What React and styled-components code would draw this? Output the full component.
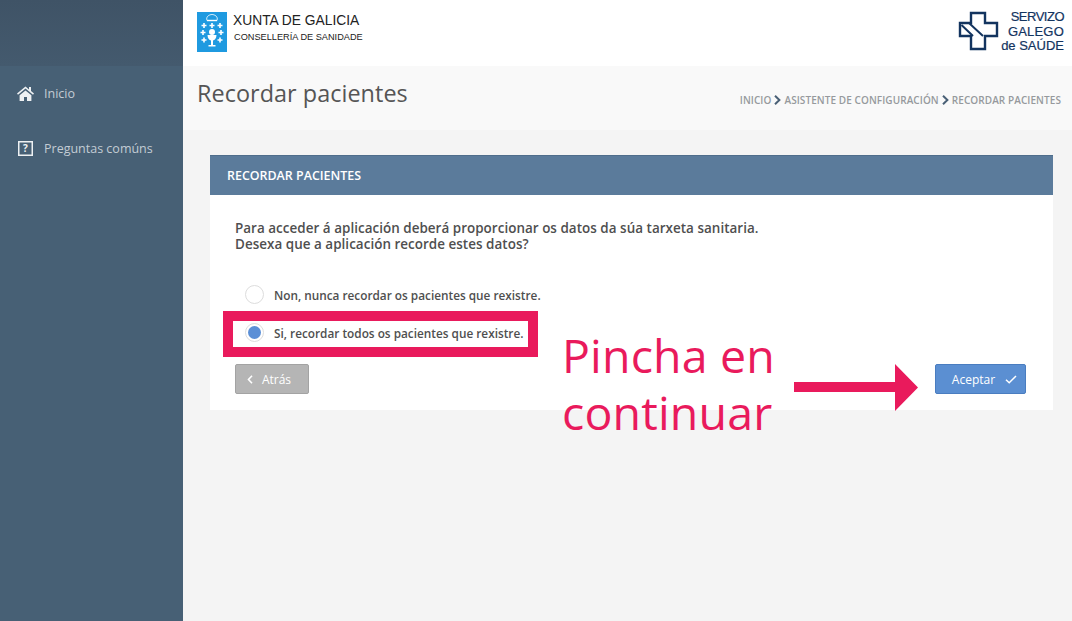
import React from "react";
import styled, { createGlobalStyle } from "styled-components";

const Global = createGlobalStyle`
  html, body { margin: 0; padding: 0; height: 100%; background: #f4f4f4; overflow: hidden; }
  body { font-family: "Open Sans", sans-serif; color: #444; }
`;
const Page = styled.div`position: relative; display: flex; width: 1072px; height: 621px; overflow: hidden;`;
const Sidebar = styled.aside`width: 183px; flex: none; background: #476075; display: flex; flex-direction: column;`;
const SideTop = styled.div`height: 66px; background: linear-gradient(180deg, #3f5366 0%, #445a6e 100%); margin-bottom: 10px;`;
const NavItem = styled.a`
  display: flex; align-items: center; height: 35px; padding-left: 17px; gap: 10px; margin-bottom: ${p => p.$mb || 0}px;
  color: #c3ccd4; font-size: 12.5px; line-height: 35px;
`;
const IconSlot = styled.span`width: 17px; height: 17px; display: flex; align-items: center; justify-content: center; color: #eef1f3;`;
const Main = styled.main`flex: 1; display: flex; flex-direction: column; min-width: 0;`;
const TopBar = styled.header`height: 66px; box-sizing: border-box; background: #fff; display: flex; align-items: flex-start; justify-content: space-between; padding: 12px 8px 0 14px;`;
const Brand = styled.div`display: flex; align-items: flex-start; gap: 6px;`;
const BrandText = styled.div`display: flex; flex-direction: column; font-family: "Liberation Sans", sans-serif; color: #222;`;
const BrandName = styled.span`font-size: 13.8px; line-height: 17px;`;
const BrandSub = styled.span`font-size: 9.2px; line-height: 13px; margin-top: 1.5px; margin-left: 1px;`;
const Sergas = styled.div`display: flex; align-items: flex-start; color: #13345f; gap: 2px;`;
const SergasText = styled.div`display: flex; flex-direction: column; align-items: flex-end; font-family: "Liberation Sans", sans-serif; font-size: 13px; line-height: 14.5px; margin-top: -2px; -webkit-text-stroke: 0.2px #13345f;`;
const SergasLine = styled.span`letter-spacing: ${p => p.$ls || 0}px;`;
const TitleBar = styled.div`height: 64px; background: #f9f9f9; display: flex; justify-content: space-between; padding: 0 11px 0 14px;`;
const Title = styled.h1`margin: 9px 0 0; font-size: 23.4px; line-height: 36px; font-weight: 400; color: #555; letter-spacing: 0.05px;`;
const Crumbs = styled.nav`display: flex; align-items: center; gap: 3px; height: 16px; margin-top: 26px; font-size: 10px; font-weight: 600; color: #96999d; letter-spacing: 0.08px;`;
const Content = styled.div`flex: 1; padding: 25px 19px 0 27px;`;
const Card = styled.section`background: #fff; height: 255px; display: flex; flex-direction: column;`;
const CardHead = styled.div`height: 39px; background: #5b7b9b; border-top: 1px solid #4f6d8b; color: #fff; font-size: 12.45px; font-weight: 600; line-height: 39px; padding-left: 17px;`;
const CardBody = styled.div`flex: 1; padding: 25px 26px 0 25px;`;
const Question = styled.p`margin: 0 0 33px; font-size: 13.45px; line-height: 16px; font-weight: 600; color: #4f4f4f; letter-spacing: 0.03px;`;
const Option = styled.label`display: flex; align-items: center; gap: 10px; height: 19px; margin: 0 0 19px 10px; font-size: 11.8px; font-weight: 600; color: #4f4f4f;`;
const Radio = styled.span`
  width: 19px; height: 19px; border-radius: 50%; border: 1px solid #ddd; box-sizing: border-box; background: #fff; flex: none;
  display: flex; align-items: center; justify-content: center;
  &::after { content: ""; width: 13px; height: 13px; border-radius: 50%; background: ${p => p.$on ? "#5b8fd6" : "transparent"}; }
`;
const Actions = styled.div`display: flex; justify-content: space-between; margin-top: 22px; padding-right: 1px;`;
const Button = styled.button`
  height: 30px; box-sizing: border-box; display: flex; align-items: center; justify-content: center; gap: ${p => p.$gap}px;
  width: ${p => p.$w}px; border-radius: 2px; font: 400 12px "Open Sans", sans-serif; color: #fff;
  padding: ${p => p.$primary ? "0 0 0 8px" : "0 6px 0 0"};
  background: ${p => p.$primary ? "#5b8fd2" : "#b5b5b5"}; border: 1px solid ${p => p.$primary ? "#4a7dc0" : "#a3a3a3"};
`;
const Highlight = styled.div`position: absolute; left: 223px; top: 311px; width: 315px; height: 46px; box-sizing: border-box; border: 10px solid #e91a5c; pointer-events: none;`;
const Callout = styled.div`position: absolute; left: 562px; top: 327px; width: 240px; font-size: 46.5px; line-height: 57px; color: #e91a5c; letter-spacing: 0.15px;`;
const ArrowSvg = styled.svg`position: absolute; left: 794px; top: 364px;`;

const Chevron = () => (
  <svg width="7" height="10" viewBox="0 0 7 10"><path d="M1 0.8 5.4 5 1 9.2" fill="none" stroke="#4a6076" strokeWidth="2"/></svg>
);

const Shield = () => (
  <svg width="30" height="40" viewBox="0 0 30 40" style={{ flex: "none" }}>
    <rect width="30" height="40" fill="#1f9ae0" />
    <g fill="none" stroke="#fff" strokeWidth="0.8">
      <path d="M10 8.500c-1.500-4 2.500-6 5-6s6.500 2 5 6z" />
      <path d="M10 8.500h10" strokeWidth="1.400" />
    </g>
    <g fill="#fff">
      {[[7, 13.5], [15, 13.5], [23, 13.5], [6, 20.5], [24, 20.5], [7, 28], [23, 28]].map(([x, y], i) => (
        <path key={i} d={`M${x - 0.8} ${y - 2.5}h1.600v1.700h1.700v1.600h-1.700v1.700h-1.600v-1.700h-1.700v-1.600h1.700z`} />
      ))}
      <circle cx="15" cy="20" r="3" />
      <path d="M10.500 23h9c0 3.500-2 5-3.500 5.500V33h2.500v1.500h-7V33h2.500v-4.500c-1.500-.5-3.500-2-3.500-5.500z" />
    </g>
  </svg>
);

const CrossLogo = () => (
  <svg width="41" height="40" viewBox="0 0 41 40" style={{ flex: "none", marginTop: "-1px" }}>
    <path d="M13 2H27V12H39V25H27V38H13V25H2V12H13Z" fill="none" stroke="#13345f" strokeWidth="2.400" />
    <path d="M3.500 14 15 25M11 12 25 25" fill="none" stroke="#13345f" strokeWidth="2" />
  </svg>
);

const HomeIcon = () => (
  <svg width="17" height="15" viewBox="0 0 17 15"><path fill="currentColor" d="M8.500 0.500 0 7.600l1 1.200L8.500 2.600 16 8.800l1-1.200-3-2.500V1h-2v2.400zM2.600 9.300V15H7v-4h3v4h4.400V9.300L8.500 4.400z"/></svg>
);
const QuestionIcon = () => (
  <svg width="15" height="15" viewBox="0 0 15 15">
    <rect x="0.750" y="0.750" width="13.500" height="13.500" fill="none" stroke="currentColor" strokeWidth="1.500"/>
    <text x="7.500" y="11.300" textAnchor="middle" fontSize="10" fontWeight="700" fontFamily="Open Sans" fill="currentColor">?</text>
  </svg>
);
const Back = () => (<svg width="6" height="9" viewBox="0 0 6 9"><path d="M5 .8 1.500 4.500 5 8.200" fill="none" stroke="#fff" strokeWidth="1.600"/></svg>);
const Check = () => (<svg width="12" height="9" viewBox="0 0 12 9"><path d="M1 4.800 4.200 7.800 11 1" fill="none" stroke="#fff" strokeWidth="1.500"/></svg>);

export default function App() {
  return (
    <Page>
      <Global />
      <Sidebar>
        <SideTop />
        <NavItem $mb={20}><IconSlot><HomeIcon /></IconSlot>Inicio</NavItem>
        <NavItem><IconSlot><QuestionIcon /></IconSlot>Preguntas comúns</NavItem>
      </Sidebar>
      <Main>
        <TopBar>
          <Brand>
            <Shield />
            <BrandText>
              <BrandName>XUNTA DE GALICIA</BrandName>
              <BrandSub>CONSELLERÍA DE SANIDADE</BrandSub>
            </BrandText>
          </Brand>
          <Sergas>
            <CrossLogo />
            <SergasText>
              <SergasLine $ls={-0.5}>SERVIZO</SergasLine>
              <SergasLine $ls={0.2}>GALEGO</SergasLine>
              <SergasLine>de SAÚDE</SergasLine>
            </SergasText>
          </Sergas>
        </TopBar>
        <TitleBar>
          <Title>Recordar pacientes</Title>
          <Crumbs>
            <span>INICIO</span><Chevron />
            <span>ASISTENTE DE CONFIGURACIÓN</span><Chevron />
            <span>RECORDAR PACIENTES</span>
          </Crumbs>
        </TitleBar>
        <Content>
          <Card>
            <CardHead>RECORDAR PACIENTES</CardHead>
            <CardBody>
              <Question>
                Para acceder á aplicación deberá proporcionar os datos da súa tarxeta sanitaria.<br />
                Desexa que a aplicación recorde estes datos?
              </Question>
              <Option><Radio />Non, nunca recordar os pacientes que rexistre.</Option>
              <Option><Radio $on />Si, recordar todos os pacientes que rexistre.</Option>
              <Actions>
                <Button $w={74} $gap={9}><Back />Atrás</Button>
                <Button $primary $w={91} $gap={10}>Aceptar<Check /></Button>
              </Actions>
            </CardBody>
          </Card>
        </Content>
      </Main>
      <Highlight />
      <Callout>Pincha en continuar</Callout>
      <ArrowSvg width="125" height="47" viewBox="0 0 125 47"><path fill="#e91a5c" d="M0 18H101V0L124 23.500 101 47V28H0Z"/></ArrowSvg>
    </Page>
  );
}
